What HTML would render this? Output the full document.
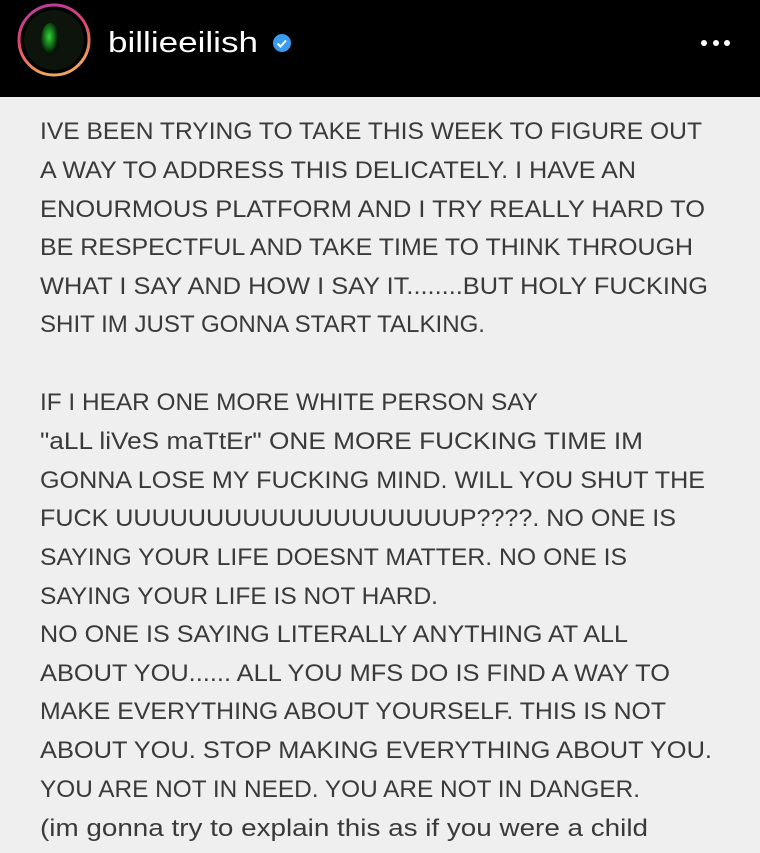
<!DOCTYPE html>
<html><head><meta charset="utf-8"><style>
html,body{margin:0;padding:0;width:760px;height:853px;overflow:hidden;background:#efefef}
svg{display:block}
</style></head><body>
<svg width="760" height="853" xmlns="http://www.w3.org/2000/svg">
<defs>
<linearGradient id="rg" x1="0" y1="0" x2="0.3" y2="1">
<stop offset="0" stop-color="#b23ba8"/><stop offset="0.5" stop-color="#e0456a"/><stop offset="1" stop-color="#f6a35a"/>
</linearGradient>
<radialGradient id="face" cx="0.45" cy="0.4" r="0.5">
<stop offset="0" stop-color="#3ad23a"/><stop offset="0.6" stop-color="#0f6a16"/><stop offset="1" stop-color="#081208"/>
</radialGradient>
</defs>
<rect x="0" y="0" width="760" height="97" fill="#000"/>
<rect x="0" y="97" width="760" height="756" fill="#efefef"/>
<circle cx="54" cy="40" r="35" fill="none" stroke="url(#rg)" stroke-width="3"/>
<circle cx="54" cy="40" r="30" fill="#0c140c"/>
<ellipse cx="50" cy="40" rx="9" ry="17" fill="url(#face)"/>
<text x="108" y="52" font-family="Liberation Sans, sans-serif" font-size="29" fill="#fff" textLength="150" lengthAdjust="spacingAndGlyphs">billieeilish</text>
<circle cx="282" cy="43" r="9" fill="#3b9bf0"/>
<path d="M277.5 43.5 l3 3 l5.5 -6" fill="none" stroke="#fff" stroke-width="2"/>
<circle cx="704" cy="43" r="3" fill="#fff"/><circle cx="716" cy="43" r="3" fill="#fff"/><circle cx="727" cy="43" r="3" fill="#fff"/>
<g font-family="Liberation Sans, sans-serif" font-size="24" fill="#3a3a3a" lengthAdjust="spacingAndGlyphs">
<text x="40" y="139" textLength="662" lengthAdjust="spacingAndGlyphs">IVE BEEN TRYING TO TAKE THIS WEEK TO FIGURE OUT</text>
<text x="40" y="178" textLength="596" lengthAdjust="spacingAndGlyphs">A WAY TO ADDRESS THIS DELICATELY. I HAVE AN</text>
<text x="40" y="217" textLength="665" lengthAdjust="spacingAndGlyphs">ENOURMOUS PLATFORM AND I TRY REALLY HARD TO</text>
<text x="40" y="255" textLength="653" lengthAdjust="spacingAndGlyphs">BE RESPECTFUL AND TAKE TIME TO THINK THROUGH</text>
<text x="40" y="294" textLength="668" lengthAdjust="spacingAndGlyphs">WHAT I SAY AND HOW I SAY IT........BUT HOLY FUCKING</text>
<text x="40" y="332" textLength="445" lengthAdjust="spacingAndGlyphs">SHIT IM JUST GONNA START TALKING.</text>
<text x="40" y="410" textLength="498" lengthAdjust="spacingAndGlyphs">IF I HEAR ONE MORE WHITE PERSON SAY</text>
<text x="40" y="449" textLength="603" lengthAdjust="spacingAndGlyphs">"aLL liVeS maTtEr" ONE MORE FUCKING TIME IM</text>
<text x="40" y="488" textLength="665" lengthAdjust="spacingAndGlyphs">GONNA LOSE MY FUCKING MIND. WILL YOU SHUT THE</text>
<text x="40" y="526" textLength="636" lengthAdjust="spacingAndGlyphs">FUCK UUUUUUUUUUUUUUUUUUUP????. NO ONE IS</text>
<text x="40" y="565" textLength="587" lengthAdjust="spacingAndGlyphs">SAYING YOUR LIFE DOESNT MATTER. NO ONE IS</text>
<text x="40" y="604" textLength="398" lengthAdjust="spacingAndGlyphs">SAYING YOUR LIFE IS NOT HARD.</text>
<text x="40" y="642" textLength="588" lengthAdjust="spacingAndGlyphs">NO ONE IS SAYING LITERALLY ANYTHING AT ALL</text>
<text x="40" y="681" textLength="630" lengthAdjust="spacingAndGlyphs">ABOUT YOU...... ALL YOU MFS DO IS FIND A WAY TO</text>
<text x="40" y="719" textLength="626" lengthAdjust="spacingAndGlyphs">MAKE EVERYTHING ABOUT YOURSELF. THIS IS NOT</text>
<text x="40" y="758" textLength="672" lengthAdjust="spacingAndGlyphs">ABOUT YOU. STOP MAKING EVERYTHING ABOUT YOU.</text>
<text x="40" y="797" textLength="600" lengthAdjust="spacingAndGlyphs">YOU ARE NOT IN NEED. YOU ARE NOT IN DANGER.</text>
<text x="40" y="836" textLength="608" lengthAdjust="spacingAndGlyphs">(im gonna try to explain this as if you were a child</text>
</g>
</svg>
</body></html>
